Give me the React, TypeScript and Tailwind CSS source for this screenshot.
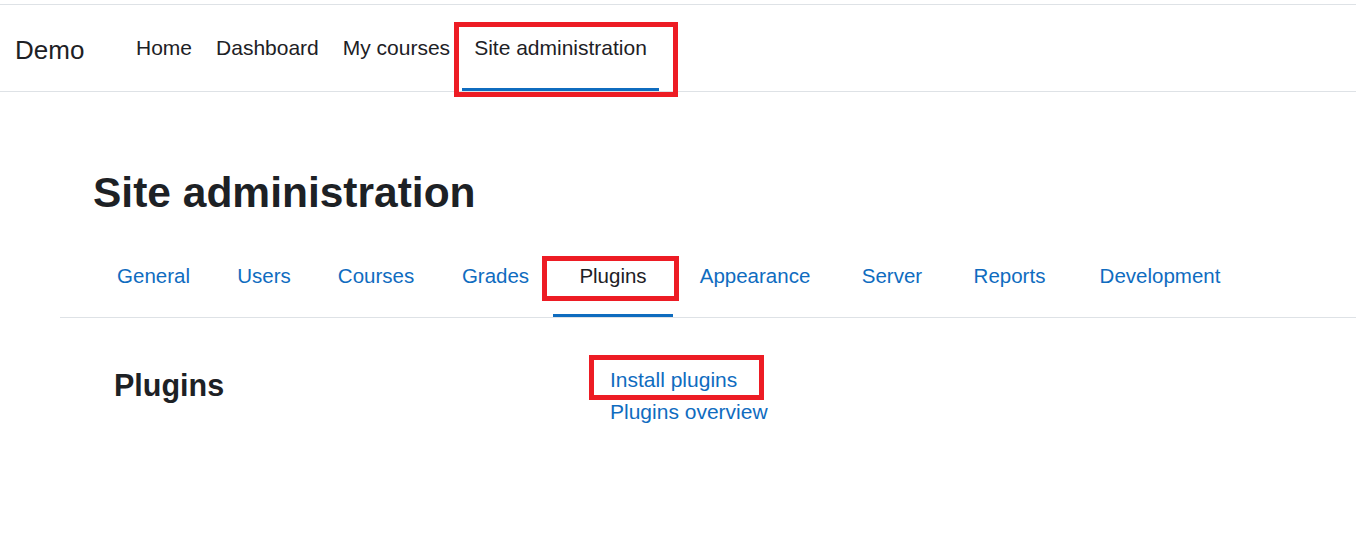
const navItems = ["Home", "Dashboard", "My courses", "Site administration"];
const tabs = [
  { label: "General", w: "w-[121px]" },
  { label: "Users", w: "w-[100px]" },
  { label: "Courses", w: "w-[124px]" },
  { label: "Grades", w: "w-[115px]" },
  { label: "Plugins", w: "w-[120px]" },
  { label: "Appearance", w: "w-[164px]" },
  { label: "Server", w: "w-[110px]" },
  { label: "Reports", w: "w-[125px]" },
  { label: "Development", w: "w-[176px]" },
];

export default function App() {
  return (
    <div className="w-[1356px] min-h-[540px] bg-white font-['Liberation_Sans',Arial,sans-serif] text-[#1d2125]">
      {/* top navbar */}
      <header className="mt-[4px] h-[88px] border-y border-[#dee2e6] flex items-stretch">
        <div className="w-[124px] pl-[15px] flex items-center text-[26px] pt-[4px]">Demo</div>
        <nav className="flex items-stretch">
          {navItems.map((item) => {
            const active = item === "Site administration";
            return (
              <div
                key={item}
                className={
                  "relative flex items-center px-[12px] pt-[3px] text-[21px] border-b-[3px] " +
                  (active ? "border-[#0f6cbf]" : "border-transparent")
                }
              >
                {item}
                {active && (
                  <div className="absolute left-[-8px] top-[17px] w-[224px] h-[75px] border-[5px] border-[#ed1c24]" />
                )}
              </div>
            );
          })}
        </nav>
      </header>

      <main className="ml-[60px] w-[1296px]">
        <h1 className="mt-[76px] pl-[33px] text-[42.5px] leading-[50px] font-bold">Site administration</h1>

        {/* secondary tabs */}
        <div className="mt-[19px] pl-[33px] flex border-b border-[#dee2e6]">
          {tabs.map((tab) => {
            const active = tab.label === "Plugins";
            return (
              <div
                key={tab.label}
                className={
                  "relative text-center pt-[27px] pb-[26px] text-[20.5px] leading-[24px] border-b-[3px] " +
                  tab.w +
                  " " +
                  (active ? "border-[#0f6cbf] text-[#1d2125]" : "border-transparent text-[#0f6cbf]")
                }
              >
                {tab.label}
                {active && (
                  <div className="absolute left-[-11px] top-[19px] w-[137px] h-[45px] border-[5px] border-[#ed1c24]" />
                )}
              </div>
            );
          })}
        </div>

        {/* plugins section */}
        <div className="mt-[46px] pl-[54px] flex items-start">
          <h2 className="w-[496px] mt-[3px] text-[30.5px] leading-[36px] font-bold">Plugins</h2>
          <ul className="flex flex-col text-[21px] leading-[32px] text-[#0f6cbf]">
            <li className="relative">
              Install plugins
              <div className="absolute left-[-21px] top-[-9px] w-[175px] h-[45px] border-[5px] border-[#ed1c24]" />
            </li>
            <li>Plugins overview</li>
          </ul>
        </div>
      </main>
    </div>
  );
}
